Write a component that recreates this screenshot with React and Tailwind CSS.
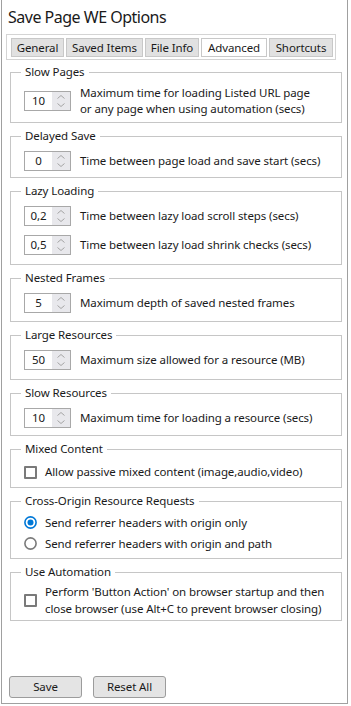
import React from "react";

const tabs = [
    { label: "General", w: "w-[53px]" },
    { label: "Saved Items", w: "w-[77px]" },
    { label: "File Info", w: "w-[54px]" },
    { label: "Advanced", w: "w-[66px]", active: true },
    { label: "Shortcuts", w: "w-[64px]" },
];

function Spinner({ value }) {
    return (
        <div className="flex h-[20px] w-[47px] shrink-0 border border-[#a8a8a8] bg-white">
            <div className="flex flex-1 items-center justify-center">{value}</div>
            <div className="flex w-[18px] flex-col items-center justify-center gap-[4px] bg-[#e8e8ec]">
                <svg width="8" height="4" viewBox="0 0 8 4">
                    <path d="M0.5 3.5 L4 0.5 L7.5 3.5" fill="none" stroke="#a4a4a4" strokeWidth="1" />
                </svg>
                <svg width="8" height="4" viewBox="0 0 8 4">
                    <path d="M0.5 0.5 L4 3.5 L7.5 0.5" fill="none" stroke="#a4a4a4" strokeWidth="1" />
                </svg>
            </div>
        </div>
    );
}

function Checkbox() {
    return <div className="size-[13px] shrink-0 rounded-[1px] border-2 border-[#7a7a7a] bg-white" />;
}

function Radio({ checked }) {
    return (
        <svg width="13" height="13" viewBox="0 0 13 13" className="shrink-0">
            {checked ? (
                <>
                    <circle cx="6.5" cy="6.5" r="5.6" fill="white" stroke="#0078d7" strokeWidth="1.6" />
                    <circle cx="6.5" cy="6.5" r="3" fill="#0078d7" />
                </>
            ) : (
                <circle cx="6.5" cy="6.5" r="5.6" fill="white" stroke="#7a7a7a" strokeWidth="1.6" />
            )}
        </svg>
    );
}

// fieldset: border line sits at legend middle
function Group({ legend, children, pb = "pb-[4px]" }) {
    return (
        <fieldset className={`ml-[8px] mt-[5px] w-[332px] border border-[#c6c6c6] px-[13px] pt-[3px] ${pb}`}>
            <legend className="ml-[-3px] px-[4px] leading-[16px]">{legend}</legend>
            {children}
        </fieldset>
    );
}

function SpinRow({ value, children, tall }) {
    return (
        <div className={`flex items-center gap-[9px] ${tall ? "h-[35px]" : "h-[28px]"}`}>
            <Spinner value={value} />
            <span className="whitespace-nowrap leading-[16px]">{children}</span>
        </div>
    );
}

export default function App() {
    return (
        <div className="ml-[1px] flex h-[704px] w-[347px] flex-col border-x border-b border-[#a0a0a0] bg-white font-['Noto_Sans',sans-serif] text-[11.5px] tracking-[-0.1px] text-[#1a1a1a]">
            <h1 className="ml-[6px] mt-[5px] text-[16px] leading-[24px] tracking-[-0.5px]">Save Page WE Options</h1>

            <div className="ml-[4px] mt-[5px] flex h-[26px] w-[330px] gap-[2px] border border-[#d4d4d4] pl-[4px] pt-[3px]">
                {tabs.map((t) => (
                    <div
                        key={t.label}
                        className={`${t.w} flex h-[19px] items-center justify-center border border-[#c8c8c8] ${t.active ? "bg-white" : "bg-[#e1e1e1]"}`}
                    >
                        {t.label}
                    </div>
                ))}
            </div>

            <div className="mt-[-1px]">
                <Group legend="Slow Pages">
                    <SpinRow value="10" tall>
                        Maximum time for loading Listed URL page
                        <br />
                        or any page when using automation (secs)
                    </SpinRow>
                </Group>

                <Group legend="Delayed Save" pb="pb-[2px]">
                    <SpinRow value="0">Time between page load and save start (secs)</SpinRow>
                </Group>

                <Group legend="Lazy Loading" pb="pb-[5px]">
                    <div className="flex flex-col gap-[1px]">
                        <SpinRow value="0,2">Time between lazy load scroll steps (secs)</SpinRow>
                        <SpinRow value="0,5">Time between lazy load shrink checks (secs)</SpinRow>
                    </div>
                </Group>

                <Group legend="Nested Frames">
                    <SpinRow value="5">Maximum depth of saved nested frames</SpinRow>
                </Group>

                <Group legend="Large Resources" pb="pb-[5px]">
                    <SpinRow value="50">Maximum size allowed for a resource (MB)</SpinRow>
                </Group>

                <Group legend="Slow Resources" pb="pb-[3px]">
                    <SpinRow value="10">Maximum time for loading a resource (secs)</SpinRow>
                </Group>

                <Group legend="Mixed Content" pb="pb-[3px]">
                    <div className="flex h-[24px] items-center gap-[8px]">
                        <Checkbox />
                        <span className="whitespace-nowrap">Allow passive mixed content (image,audio,video)</span>
                    </div>
                </Group>

                <Group legend="Cross-Origin Resource Requests">
                    <div className="flex h-[21px] items-center gap-[8px]">
                        <Radio checked />
                        <span className="whitespace-nowrap">Send referrer headers with origin only</span>
                    </div>
                    <div className="flex h-[21px] items-center gap-[8px]">
                        <Radio />
                        <span className="whitespace-nowrap">Send referrer headers with origin and path</span>
                    </div>
                </Group>

                <Group legend="Use Automation" pb="pb-[3px]">
                    <div className="flex h-[34px] items-center gap-[8px]">
                        <Checkbox />
                        <span className="whitespace-nowrap leading-[17px]">
                            Perform 'Button Action' on browser startup and then
                            <br />
                            close browser (use Alt+C to prevent browser closing)
                        </span>
                    </div>
                </Group>
            </div>

            <div className="mb-[5px] ml-[7px] mt-auto flex gap-[11px]">
                <button className="h-[22px] w-[73px] rounded-[3px] border border-[#9c9c9c] bg-[#e4e4e4]">
                    Save
                </button>
                <button className="h-[22px] w-[73px] rounded-[3px] border border-[#9c9c9c] bg-[#e4e4e4]">
                    Reset All
                </button>
            </div>
        </div>
    );
}
